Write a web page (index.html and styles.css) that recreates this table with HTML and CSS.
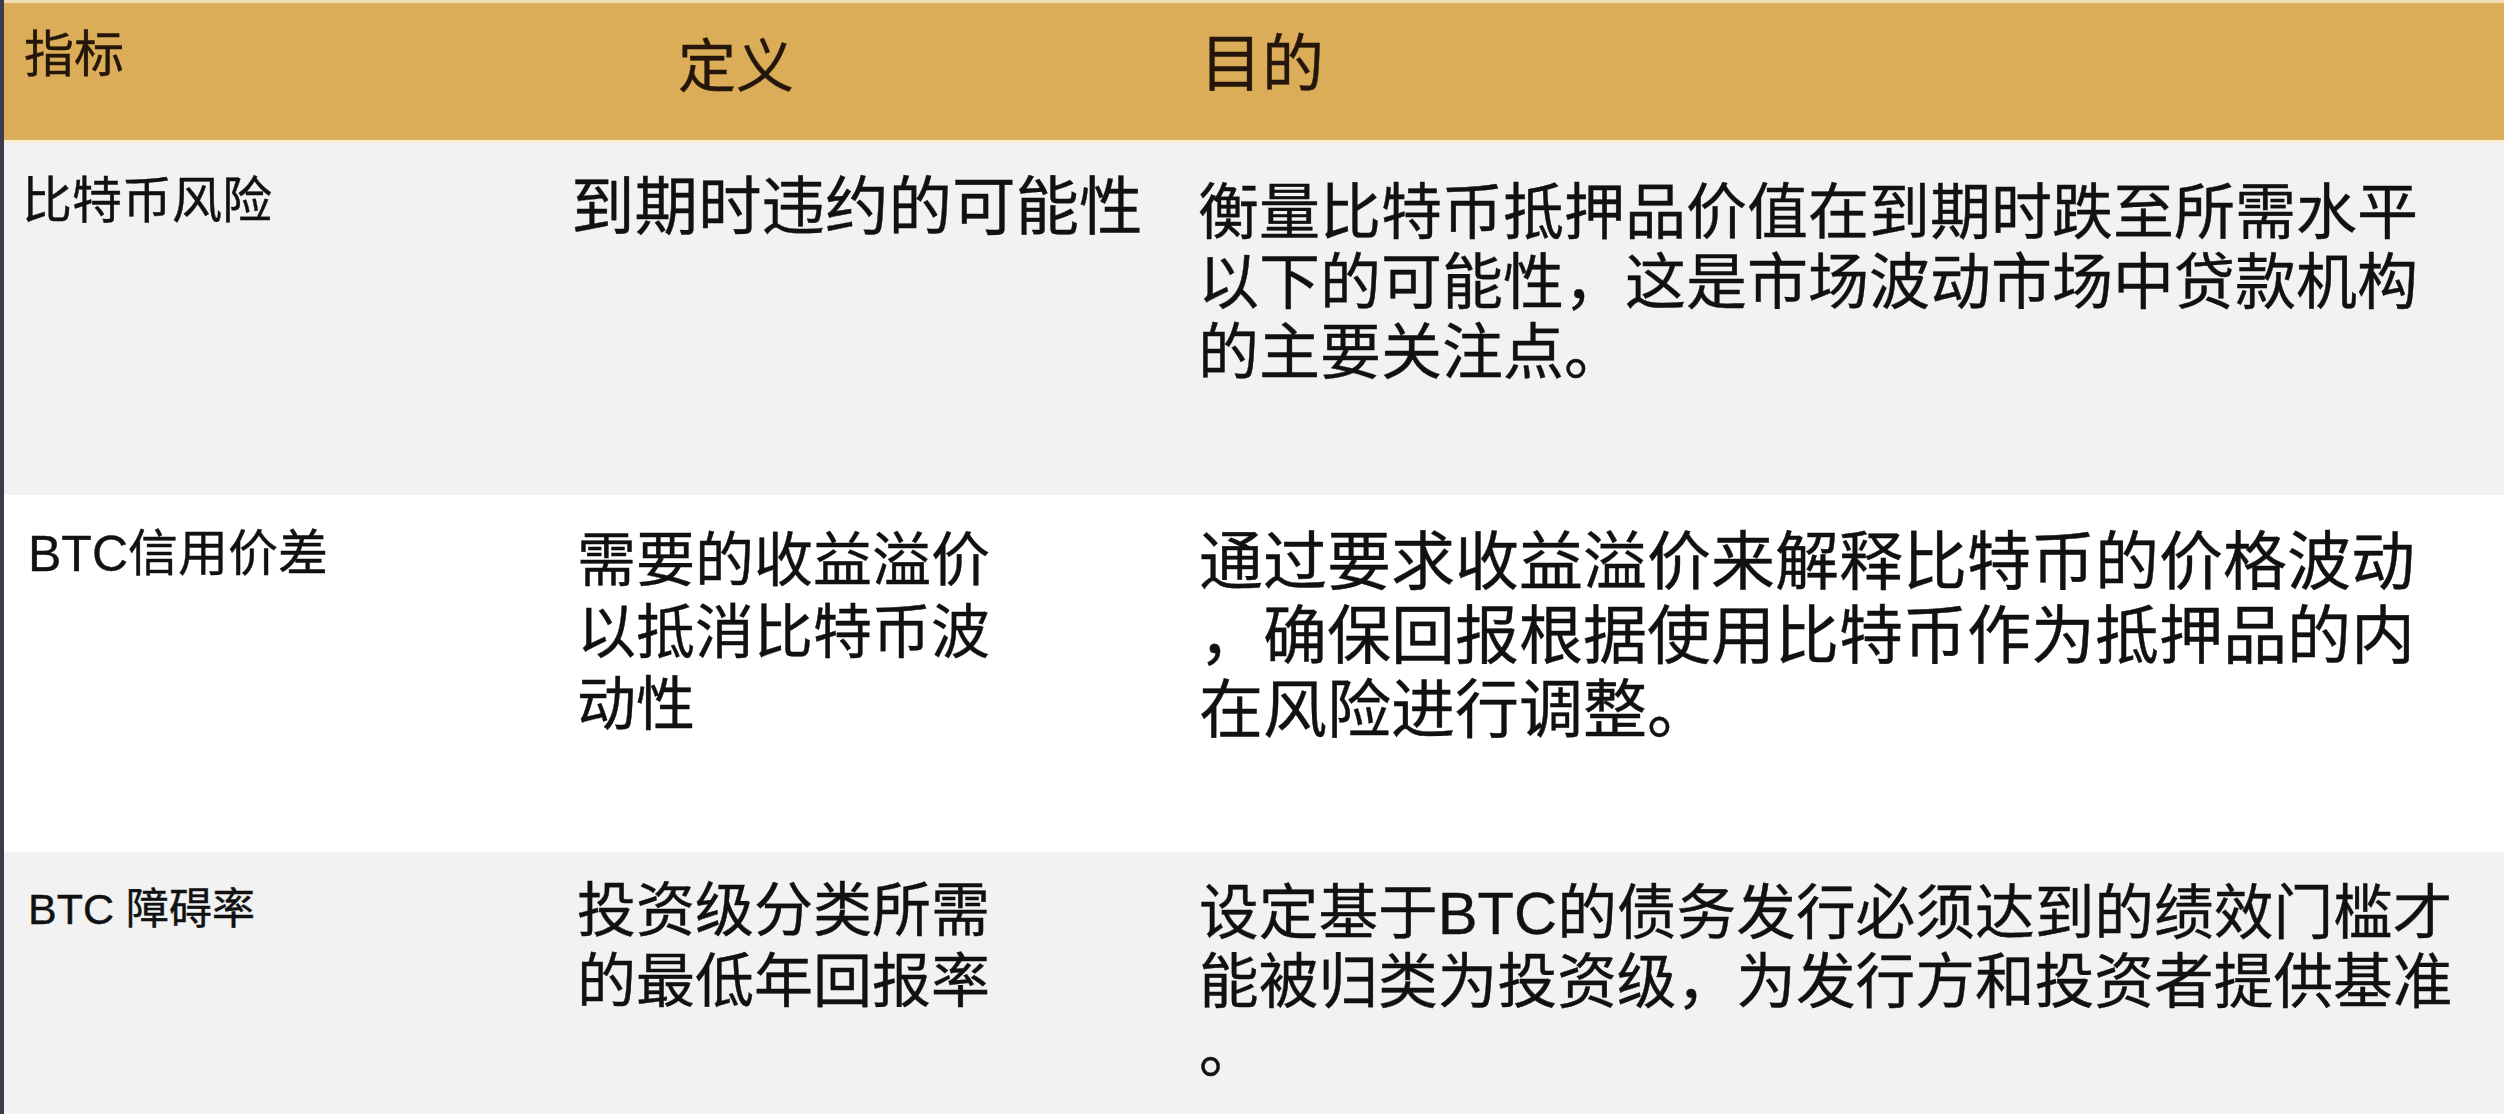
FILE: index.html
```html
<!DOCTYPE html>
<html lang="zh-CN">
<head>
<meta charset="utf-8">
<title>BTC 指标</title>
<link rel="stylesheet" href="styles.css">
</head>
<body>
<div class="table">
  <div class="row head">
    <div class="cell c1"><span class="t h1">指标</span></div>
    <div class="cell c2"><span class="t h2">定义</span></div>
    <div class="cell c3"><span class="t h3">目的</span></div>
  </div>
  <div class="row r1 grey">
    <div class="cell c1"><span class="t k1">比特币风险</span></div>
    <div class="cell c2"><span class="t d1">到期时违约的可能性</span></div>
    <div class="cell c3"><span class="t p1">衡量比特币抵押品价值在到期时跌至所需水平<br>以下的可能性，这是市场波动市场中贷款机构<br>的主要关注点。</span></div>
  </div>
  <div class="row r2 white">
    <div class="cell c1"><span class="t k2">BTC信用价差</span></div>
    <div class="cell c2"><span class="t d2">需要的收益溢价<br>以抵消比特币波<br>动性</span></div>
    <div class="cell c3"><span class="t p2">通过要求收益溢价来解释比特币的价格波动<br>，确保回报根据使用比特币作为抵押品的内<br>在风险进行调整。</span></div>
  </div>
  <div class="row r3 grey">
    <div class="cell c1"><span class="t k3">BTC 障碍率</span></div>
    <div class="cell c2"><span class="t d3">投资级分类所需<br>的最低年回报率</span></div>
    <div class="cell c3"><span class="t p3">设定基于BTC的债务发行必须达到的绩效门槛才<br>能被归类为投资级，为发行方和投资者提供基准<br>。</span></div>
  </div>
</div>
</body>
</html>
```

FILE: styles.css
```css
html, body {
  margin: 0;
  padding: 0;
}
body {
  width: 2504px;
  height: 1114px;
  overflow: hidden;
  background: #f2f2f2;
  font-family: "Liberation Sans", "Noto Sans CJK SC", sans-serif;
  color: #111111;
}
.table {
  border-left: 4px solid #3b3d4a;
  height: 1114px;
  box-sizing: border-box;
}
.row {
  display: grid;
  grid-template-columns: 556px 622px 1fr;
  box-sizing: border-box;
}
.cell {
  box-sizing: border-box;
}
.t {
  display: block;
  white-space: nowrap;
  -webkit-text-stroke: 0.4px currentColor;
}
.c1 { padding-left: 20px; }
.c2 { padding-left: 14px; }
.c3 { padding-left: 16px; }

/* header */
.head {
  height: 143px;
  background: #dbad58;
  border-top: 3px solid #eedcb6;
  border-bottom: 3px solid #f8ecd2;
  color: #24160a;
}
.h1 { font-size: 50px; line-height: 50px; padding-top: 27px; }
.h2 { font-size: 58px; line-height: 58px; padding-top: 35px; margin-left: 104px; }
.h3 { font-size: 62px; line-height: 62px; padding-top: 31px; margin-left: 2px; }

.grey { background: #f2f2f2; }
.white { background: #ffffff; }

.r1 { height: 352px; }
.r2 { height: 357px; }
.r3 { height: 262px; }

/* row 1 */
.k1 { font-size: 50px; line-height: 50px; padding-top: 33px; margin-left: -2px; }
.d1 { font-size: 63.5px; line-height: 64px; padding-top: 32px; margin-left: -3px; }
.p1 { font-size: 61px; line-height: 70px; padding-top: 35px; }

/* row 2 */
.k2 { font-size: 50px; line-height: 50px; padding-top: 34px; margin-left: 4px; }
.d2 { font-size: 59px; line-height: 72px; padding-top: 30px; margin-left: 3px; }
.p2 { font-size: 64px; line-height: 74px; padding-top: 30px; margin-left: 1px; }

/* row 3 */
.k3 { font-size: 43px; line-height: 43px; padding-top: 36px; margin-left: 4px; }
.d3 { font-size: 59px; line-height: 71px; padding-top: 24px; margin-left: 3px; }
.p3 { font-size: 59.7px; line-height: 69px; padding-top: 27px; margin-left: 1px; }
```
